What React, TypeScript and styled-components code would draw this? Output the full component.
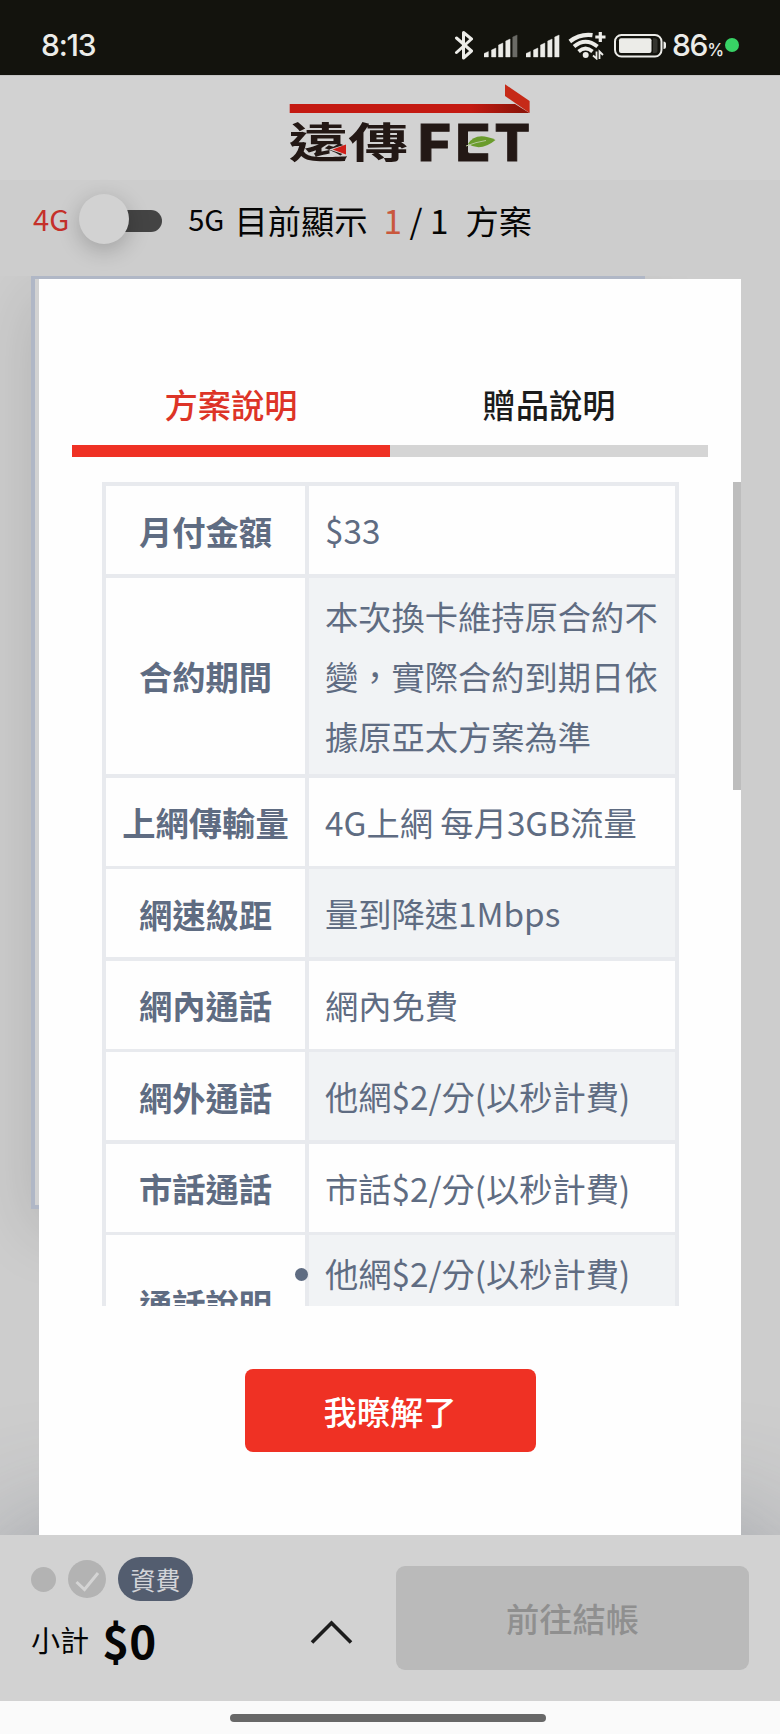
import React from 'react';
import styled, { createGlobalStyle } from 'styled-components';

const GlobalStyle = createGlobalStyle`
  *, *::before, *::after { box-sizing: border-box; }
  body {
    margin: 0;
    background: #cdcdcd;
    font-family: "Noto Sans CJK TC", "Noto Sans", sans-serif;
    font-size: 33.28px;
  }
  button { font-family: inherit; border: 0; padding: 0; }
`;

const Screen = styled.div`
  width: 780px;
  height: 1734px;
  display: flex;
  flex-direction: column;
  overflow: hidden;
  background: #cdcdcd;
`;

/* ---------- system status bar ---------- */

const StatusBar = styled.div`
  flex: none;
  height: 75px;
  padding: 15px 41px 0 41px;
  display: flex;
  align-items: center;
  justify-content: space-between;
  background: #13130d;
  color: #ecece8;
  font-family: Inter, "Noto Sans", sans-serif;
`;

const Clock = styled.span`
  font-size: 30px;
  line-height: 60px;
  font-weight: 500;
  letter-spacing: -1.2px;
`;

const StatusIcons = styled.div`
  display: flex;
  align-items: center;
  height: 60px;
`;

const Glyph = styled.svg<{ $gap: number }>`
  display: block;
  flex: none;
  margin-right: ${(p) => p.$gap}px;
`;

const BatteryText = styled.span`
  display: flex;
  align-items: baseline;
  font-size: 30px;
  line-height: 60px;
  font-weight: 500;
  letter-spacing: -1.3px;
  width: 53px;
  white-space: nowrap;
  small { font-size: 17px; line-height: 20px; letter-spacing: 0; }
`;

const PrivacyDot = styled.i`
  width: 14px;
  height: 14px;
  border-radius: 50%;
  background: #38d265;
`;

/* ---------- site header ---------- */

const Header = styled.header`
  flex: none;
  height: 105px;
  border-top: 1px solid #c4c4c4;
  background: #d2d2d2;
  display: flex;
  justify-content: center;
  padding: 4px 0 0 39px;
`;

const LogoArt = styled.svg`
  display: block;
  overflow: visible;
`;

const PlanBar = styled.div`
  flex: none;
  height: 96px;
  padding-left: 33px;
  display: flex;
  align-items: flex-start;
  color: #050505;
  background: #cdcdcd;
  position: relative;
  z-index: 1;
`;

const Generation = styled.span<{ $active?: boolean }>`
  font-size: 29.12px;
  line-height: 77px;
  color: ${(p) => (p.$active ? '#c5302a' : '#050505')};
`;

const Toggle = styled.div`
  width: 83px;
  height: 50px;
  margin: 14px 26px 0 10px;
  display: flex;
  align-items: center;
`;

const Knob = styled.span`
  width: 50px;
  height: 50px;
  border-radius: 50%;
  background: #d2d2d2;
  box-shadow: 0 6px 22px rgba(0, 0, 0, 0.22);
  z-index: 1;
`;

const Track = styled.span`
  width: 53px;
  height: 22px;
  margin: 3px 0 0 -20px;
  border-radius: 11px;
  background: #444;
`;

const Count = styled.p`
  margin: 0 0 0 10px;
  line-height: 80px;
  white-space: nowrap;
`;

const Current = styled.b`
  font-weight: 400;
  margin-left: 16px;
  color: #c9573c;
`;

const Unit = styled.span`
  margin-left: 17px;
`;

/* ---------- plan page and dialog ---------- */

const Main = styled.main`
  flex: 1;
  position: relative;
  padding-left: 31px;
`;

const PlanCard = styled.div`
  width: 614px;
  height: 933px;
  border: 4px solid #b0b7c6;
  border-top-width: 3px;
  background: #d2d2d2;
  box-shadow: 0 21px 62px rgba(0, 0, 0, 0.13);
`;

const Dialog = styled.section`
  position: absolute;
  z-index: 2;
  top: 3px;
  left: 39px;
  right: 39px;
  bottom: 0;
  background: #fefefe;
  padding-top: 88px;
  display: flex;
  flex-direction: column;
`;

const Tabs = styled.div`
  margin: 0 33px;
  display: grid;
  grid-template-columns: 1fr 1fr;
`;

const Tab = styled.button<{ $active?: boolean }>`
  height: 90px;
  padding-bottom: 4px;
  background: none;
  font-size: 33.28px;
  line-height: 66px;
  font-weight: 500;
  color: ${(p) => (p.$active ? '#dd3427' : '#1c1c1c')};
  border-bottom: 12px solid ${(p) => (p.$active ? '#ef3124' : '#d5d5d5')};
`;

const ScrollArea = styled.div`
  margin-top: 25px;
  height: 824px;
  padding-left: 63px;
  overflow: hidden;
  display: flex;
  justify-content: space-between;
  align-items: flex-start;
`;

const ScrollThumb = styled.div`
  width: 8px;
  height: 308px;
  background: #bdbdbd;
`;

const SpecTable = styled.div`
  width: 577px;
  padding: 4px;
  display: flex;
  flex-direction: column;
  gap: 3.5px;
  background: #e8eaee;
  color: #5f6c82;
`;

const SpecRow = styled.div<{ $height: number }>`
  height: ${(p) => p.$height}px;
  display: grid;
  grid-template-columns: 199px 366px;
  gap: 4px;
`;

const Label = styled.div`
  background: #fefefe;
  display: flex;
  align-items: center;
  justify-content: center;
  font-weight: 700;
`;

const Value = styled.div<{ $shaded: boolean }>`
  background: ${(p) => (p.$shaded ? '#f1f3f5' : '#fefefe')};
  padding: 0 12px 0 16px;
  display: flex;
  align-items: center;
  line-height: 59.9px;
`;

const NoteList = styled.ul`
  list-style: none;
  margin: 8px 0 0;
  padding: 0;
  align-self: flex-start;
`;

const Note = styled.li`
  position: relative;
  &::before {
    content: '';
    position: absolute;
    left: -30px;
    top: 25px;
    width: 13px;
    height: 13px;
    border-radius: 50%;
    background: #5f6c82;
  }
`;

const ConfirmButton = styled.button`
  align-self: center;
  width: 291px;
  height: 83px;
  margin-top: 63px;
  border-radius: 8px;
  background: #ef3124;
  color: #fff;
  font-size: 33.28px;
  font-weight: 500;
`;

/* ---------- checkout bar ---------- */

const Checkout = styled.footer`
  flex: none;
  height: 166px;
  padding: 22px 31px 0;
  display: flex;
  background: #d2d2d2;
  box-shadow: 0 0 125px rgba(60, 70, 90, 0.4);
  z-index: 0;
`;

const Summary = styled.div`
  width: 250px;
`;

const Steps = styled.div`
  display: flex;
  align-items: center;
  height: 44px;
`;

const StepDot = styled.i`
  width: 25px;
  height: 25px;
  border-radius: 50%;
  background: #b3b3b3;
  margin-right: 12px;
`;

const StepBadge = styled.span`
  width: 75px;
  height: 44px;
  margin-left: 12px;
  border-radius: 22px;
  background: #535d6f;
  color: #d2d4d8;
  font-size: 24.96px;
  line-height: 44px;
  text-align: center;
`;

const Subtotal = styled.div`
  display: flex;
  align-items: center;
  color: #050505;
  font-size: 29.12px;
  line-height: 76px;
`;

const Amount = styled.strong`
  margin-left: 13px;
  font-size: 45.76px;
  font-weight: 700;
`;

const Expand = styled.div`
  width: 115px;
  padding: 62px 0 0 28px;
  svg { display: block; }
`;

const CheckoutButton = styled.button`
  width: 353px;
  height: 104px;
  margin-top: 9px;
  padding-bottom: 1px;
  border-radius: 9px;
  background: #bababa;
  color: #8f8f8f;
  font-size: 33.28px;
  font-weight: 500;
`;

const SystemNav = styled.div`
  flex: none;
  height: 33px;
  padding-top: 13px;
  display: flex;
  justify-content: center;
  background: #fafafa;
  z-index: 1;
`;

const HomePill = styled.i`
  width: 316px;
  height: 8px;
  margin-right: 5px;
  border-radius: 4px;
  background: #686868;
`;

const LIGHT = '#ecece8';

const Bluetooth = () => (
  <Glyph $gap={10} width="20" height="30" viewBox="455 30 20 30" fill="none" stroke={LIGHT} strokeWidth="3" strokeLinejoin="round" strokeLinecap="round">
    <path d="M457.5 38 L472.5 51 L464.5 58 V32.500 L472.500 39 L457.500 52.500" />
  </Glyph>
);

const BARS = [
  [0, 51.5],
  [7.5, 48],
  [14.5, 43],
  [21.7, 39],
  [28.7, 35],
];

const Signal = ({ dim, gap }: { dim?: boolean; gap: number }) => (
  <Glyph $gap={gap} width="34" height="30" viewBox="0 30 34 30">
    {BARS.map(([x, y], i) => (
      <path
        key={x}
        d={`M${x} 57 V${y + 2} L${x + 4.4} ${y} V57 Z`}
        fill={dim && i === 4 ? '#6b6b66' : LIGHT}
        stroke={dim && i === 4 ? '#6b6b66' : LIGHT}
        strokeWidth="0.4"
      />
    ))}
  </Glyph>
);

const Wifi = () => (
  <Glyph $gap={8} width="38" height="30" viewBox="569 30 38 30" fill="none" stroke={LIGHT}>
    <path d="M570.800 41.500 Q581 33.500 593.500 35.200" strokeWidth="4.200" />
    <path d="M575 46.500 Q586.500 37 598.500 46.500" strokeWidth="4" />
    <path d="M579.600 51.500 Q586.500 45.500 593.500 51.500" strokeWidth="3.800" />
    <circle cx="586.700" cy="55" r="3" fill={LIGHT} stroke="none" />
    <path d="M601.300 32 V42 M596.300 37 H606.500" strokeWidth="3.200" />
    <path d="M597.500 51.500 V58.500 L594 55.500 M600.500 59 V51.500 L604 55" strokeWidth="1.800" />
  </Glyph>
);

const Battery = () => (
  <Glyph $gap={5} width="53" height="30" viewBox="615 30 53 30">
    <rect x="616" y="35" width="46.500" height="21.500" rx="6.500" fill="none" stroke={LIGHT} strokeWidth="2" />
    <rect x="620" y="38.300" width="32.500" height="14.700" rx="2" fill={LIGHT} />
    <path d="M654 38.300 h2 q2.500 0 2.500 2.500 v9.700 q0 2.500 -2.500 2.500 h-2 z" fill="#35352f" />
    <path d="M664.500 41.500 q2.500 0 2.500 2.500 v2.500 q0 2.500 -2.500 2.500 z" fill={LIGHT} />
  </Glyph>
);

const INK = '#231815';
const PAPER = '#d2d2d2';

const Logo = () => (
  <LogoArt width="244" height="84" viewBox="288 81 244 84">
    <defs>
      <linearGradient id="ribbon" x1="0" x2="1">
        <stop offset="0.75" stopColor="#c41a12" />
        <stop offset="0.96" stopColor="#8e1409" />
      </linearGradient>
    </defs>
    <path d="M289.700 105 H515 L529.500 114 H289.700 Z" fill="url(#ribbon)" />
    <path d="M505 85.300 L529.600 102 V114 L505 97 Z" fill="#c62a18" />
    <g fill={INK} fontFamily='"Noto Sans CJK TC", sans-serif' fontWeight="700">
      <text transform="translate(288.500 158.600) scale(1.440 1)" fontSize="41.500">遠傳</text>
    </g>
    <path d="M347 145 L329 150.500 L347 156.500 Z" fill={PAPER} />
    <path d="M346 145.500 L332.500 150.500 L346 155.500 Z" fill="#cf1f19" />
    <g fill={INK} stroke={INK} strokeWidth="1" fontFamily="Inter, sans-serif" fontWeight="800" fontSize="51">
      <text x="418" y="161.500" textLength="33" lengthAdjust="spacingAndGlyphs">F</text>
      <text x="455.500" y="161.500" textLength="35" lengthAdjust="spacingAndGlyphs">E</text>
      <text x="494.500" y="161.500" textLength="35.500" lengthAdjust="spacingAndGlyphs">T</text>
    </g>
    <path d="M468 132.500 H491 V153.500 H468 Z" fill={PAPER} />
    <path d="M468 145 Q476 132 495.500 141 Q481 153 468 145 Z" fill="#6a9c2c" />
    <path d="M466 147 Q476 143 486 141.500" fill="none" stroke="#b5c99b" strokeWidth="1" />
  </LogoArt>
);

const CheckCircle = () => (
  <svg width="38" height="38" viewBox="0 0 38 38" fill="none">
    <circle cx="19" cy="19" r="19" fill="#b3b3b3" />
    <path d="M8.500 22 L16.500 29.500 L30 13" stroke="#d4d4d4" strokeWidth="3" />
  </svg>
);

const SPECS = [
  { label: '月付金額', value: '$33' },
  { label: '合約期間', value: '本次換卡維持原合約不變，實際合約到期日依據原亞太方案為準', height: 196.5 },
  { label: '上網傳輸量', value: '4G上網 每月3GB流量' },
  { label: '網速級距', value: '量到降速1Mbps' },
  { label: '網內通話', value: '網內免費' },
  { label: '網外通話', value: '他網$2/分(以秒計費)' },
  { label: '市話通話', value: '市話$2/分(以秒計費)' },
  { label: '通話說明', notes: ['他網$2/分(以秒計費)'], height: 136 },
];

export default function App() {
  return (
    <>
      <GlobalStyle />
      <Screen>
        <StatusBar>
          <Clock>8:13</Clock>
          <StatusIcons>
            <Bluetooth />
            <Signal dim gap={8} />
            <Signal gap={8} />
            <Wifi />
            <Battery />
            <BatteryText>86<small>%</small></BatteryText>
            <PrivacyDot />
          </StatusIcons>
        </StatusBar>
        <Header>
          <Logo />
        </Header>
        <PlanBar>
          <Generation $active>4G</Generation>
          <Toggle>
            <Knob />
            <Track />
          </Toggle>
          <Generation>5G</Generation>
          <Count>
            目前顯示<Current>1</Current> / 1<Unit>方案</Unit>
          </Count>
        </PlanBar>
        <Main>
          <PlanCard />
          <Dialog>
            <Tabs>
              <Tab $active>方案說明</Tab>
              <Tab>贈品說明</Tab>
            </Tabs>
            <ScrollArea>
              <SpecTable>
                {SPECS.map((spec, i) => (
                  <SpecRow key={spec.label} $height={spec.height ?? 88}>
                    <Label>{spec.label}</Label>
                    <Value $shaded={i % 2 === 1}>
                      {spec.notes ? (
                        <NoteList>
                          {spec.notes.map((note) => (
                            <Note key={note}>{note}</Note>
                          ))}
                        </NoteList>
                      ) : (
                        spec.value
                      )}
                    </Value>
                  </SpecRow>
                ))}
              </SpecTable>
              <ScrollThumb />
            </ScrollArea>
            <ConfirmButton>我暸解了</ConfirmButton>
          </Dialog>
        </Main>
        <Checkout>
          <Summary>
            <Steps>
              <StepDot />
              <CheckCircle />
              <StepBadge>資費</StepBadge>
            </Steps>
            <Subtotal>
              小計<Amount>$0</Amount>
            </Subtotal>
          </Summary>
          <Expand>
            <svg width="44" height="26" viewBox="0 0 44 26" fill="none" stroke="#1c1c1c" strokeWidth="3.6">
              <path d="M3 23.500 L22.500 4 L42 23.500" />
            </svg>
          </Expand>
          <CheckoutButton>前往結帳</CheckoutButton>
        </Checkout>
        <SystemNav>
          <HomePill />
        </SystemNav>
      </Screen>
    </>
  );
}
